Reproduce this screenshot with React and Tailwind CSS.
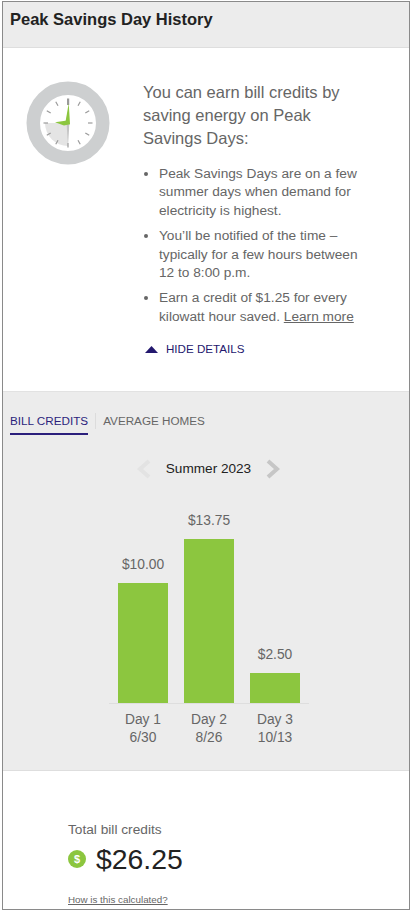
const bars = [
  { value: "$10.00", height: "h-[120px]", day: "Day 1", date: "6/30" },
  { value: "$13.75", height: "h-[164px]", day: "Day 2", date: "8/26" },
  { value: "$2.50", height: "h-[30px]", day: "Day 3", date: "10/13" },
];

const bullets = [
  "Peak Savings Days are on a few summer days when demand for electricity is highest.",
  "You’ll be notified of the time – typically for a few hours between 12 to 8:00 p.m.",
];

function Clock() {
  const ticks = [30, 60, 90, 120, 150, 180, 210, 240, 270, 300, 330];
  return (
    <svg width="84" height="84" viewBox="0 0 84 84" className="shrink-0">
      <circle cx="42" cy="42" r="34.75" fill="#fff" stroke="#cdcfd0" strokeWidth="13.5" />
      <path d="M42 42 L42 65 A23 23 0 0 1 19 42 Z" fill="#e4e4e4" />
      {ticks.map((a) => (
        <line key={a} x1="42" y1="17.5" x2="42" y2="22" stroke="#9a9a9a" strokeWidth="1.2" transform={`rotate(${a} 42 42)`} />
      ))}
      <path d="M40.6 42 L42 65 L43.4 42 Z" fill="#c4c4c4" />
      <path d="M41 17.5 H43.2 V24 H41 Z" fill="#9a9a9a" />
      <path d="M42.7 22.3 L39.3 42 L44 43.2 Z" fill="#8cc63f" />
      <path d="M29 41.3 L41 39.4 L44 43.2 L38 44.5 Z" fill="#8cc63f" />
    </svg>
  );
}

export default function App() {
  return (
    <div className="ml-[2px] mt-[1px] w-[408px] h-[909px] overflow-hidden bg-white border border-[#8a8a8a] text-[#666] font-['Liberation_Sans',Arial,sans-serif]">
      <div className="h-[46px] bg-[#ececec] border-b border-[#dedede] pl-[7px] pt-[7px]">
        <h1 className="text-[16.5px] leading-[20px] font-bold text-[#222]">Peak Savings Day History</h1>
      </div>

      <div className="h-[344px] flex border-b border-[#e2e2e2]">
        <div className="pl-[23px] pt-[33px] w-[140px] shrink-0">
          <Clock />
        </div>
        <div className="pt-[33px] w-[226px]">
          <p className="text-[16.5px] leading-[23px] w-[215px]">You can earn bill credits by saving energy on Peak Savings Days:</p>
          <ul className="mt-[15px] pl-[16px] w-[218px] list-disc text-[13.7px] leading-[18.4px] space-y-[7px]">
            {bullets.map((text) => (
              <li key={text}>{text}</li>
            ))}
            <li>
              Earn a credit of $1.25 for every kilowatt hour saved. <span className="underline">Learn more</span>
            </li>
          </ul>
          <div className="mt-[15px] ml-[2px] flex items-center gap-[8px] text-[11.6px] leading-[16px] text-[#23186e]">
            <svg width="13" height="7" viewBox="0 0 13 7">
              <path d="M6.5 0 L13 7 H0 Z" fill="#23186e" />
            </svg>
            HIDE DETAILS
          </div>
        </div>
      </div>

      <div className="h-[379px] bg-[#ececec] border-b border-[#dedede]">
        <div className="flex items-start pl-[7px] pt-[21px] text-[11.7px] leading-[16px]">
          <div className="border-b-2 border-[#2b1f7c] pb-[4px] text-[#2b1f7c]">BILL CREDITS</div>
          <div className="ml-[7px] mr-[7px] w-px h-[16px] bg-[#dcdcdc]" />
          <div>AVERAGE HOMES</div>
        </div>

        <div className="mt-[24px] pl-[5px] flex items-center justify-center gap-[14px] text-[13.6px] leading-[20px] text-[#222]">
          <svg width="16" height="20" viewBox="0 0 16 20" fill="none" stroke="#e3e3e3" strokeWidth="4">
            <path d="M13 2 L4 10 L13 18" />
          </svg>
          <span>Summer 2023</span>
          <svg width="16" height="20" viewBox="0 0 16 20" fill="none" stroke="#c6c6c6" strokeWidth="4">
            <path d="M3 2 L12 10 L3 18" />
          </svg>
        </div>

        <div className="mt-[37px] ml-[106px] w-[200px] h-[188px] flex items-end gap-[16px] px-[9px] border-b border-[#dedede]">
          {bars.map((bar) => (
            <div key={bar.day} className="w-[50px] flex flex-col items-center">
              <div className="text-[13.8px] leading-[20px] mb-[8px]">{bar.value}</div>
              <div className={`w-[50px] bg-[#8cc63f] ${bar.height}`} />
            </div>
          ))}
        </div>

        <div className="mt-[7px] ml-[106px] w-[200px] flex gap-[16px] px-[9px]">
          {bars.map((bar) => (
            <div key={bar.day} className="w-[50px] text-center text-[13.8px] leading-[18px] whitespace-nowrap">
              <div>{bar.day}</div>
              <div>{bar.date}</div>
            </div>
          ))}
        </div>
      </div>

      <div className="pl-[65px] pt-[50px]">
        <div className="text-[13.7px] leading-[18px]">Total bill credits</div>
        <div className="mt-[2px] flex items-center gap-[10px]">
          <div className="w-[18px] h-[18px] rounded-full bg-[#8cc63f] text-white text-[11px] font-bold flex items-center justify-center">$</div>
          <div className="text-[28.4px] leading-[36px] text-[#222]">$26.25</div>
        </div>
        <div className="mt-[16px] text-[9.8px] leading-[14px] underline">How is this calculated?</div>
      </div>
    </div>
  );
}
